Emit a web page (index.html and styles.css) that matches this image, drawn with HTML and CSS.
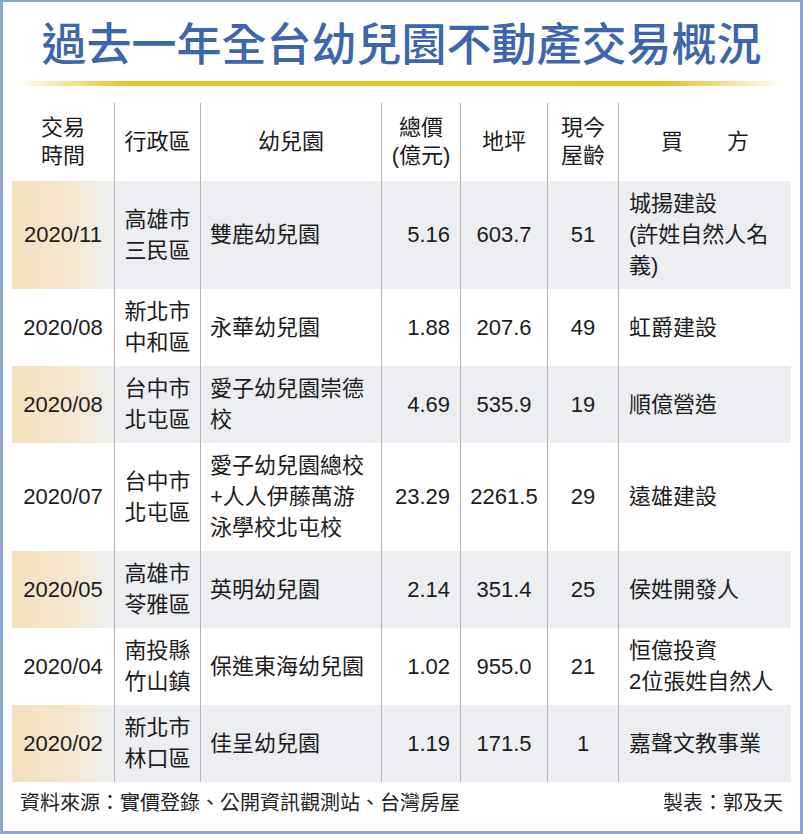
FILE: index.html
```html
<!DOCTYPE html>
<html lang="zh-Hant">
<head>
<meta charset="utf-8">
<title>過去一年全台幼兒園不動產交易概況</title>
<link rel="stylesheet" href="styles.css">
</head>
<body>
<div class="frame">
  <h1 class="title">過去一年全台幼兒園不動產交易概況</h1>
  <div class="rule"></div>
  <div class="table">
    <div class="row head">
      <div class="cell c1">交易<br>時間</div>
      <div class="cell c2">行政區</div>
      <div class="cell c3">幼兒園</div>
      <div class="cell c4">總價<br>(億元)</div>
      <div class="cell c5">地坪</div>
      <div class="cell c6">現今<br>屋齡</div>
      <div class="cell c7">買　　方</div>
    </div>
    <div class="row shade">
      <div class="cell c1">2020/11</div>
      <div class="cell c2">高雄市<br>三民區</div>
      <div class="cell c3">雙鹿幼兒園</div>
      <div class="cell c4">5.16</div>
      <div class="cell c5">603.7</div>
      <div class="cell c6">51</div>
      <div class="cell c7">城揚建設<br>(許姓自然人名<br>義)</div>
    </div>
    <div class="row">
      <div class="cell c1">2020/08</div>
      <div class="cell c2">新北市<br>中和區</div>
      <div class="cell c3">永華幼兒園</div>
      <div class="cell c4">1.88</div>
      <div class="cell c5">207.6</div>
      <div class="cell c6">49</div>
      <div class="cell c7">虹爵建設</div>
    </div>
    <div class="row shade">
      <div class="cell c1">2020/08</div>
      <div class="cell c2">台中市<br>北屯區</div>
      <div class="cell c3">愛子幼兒園崇德<br>校</div>
      <div class="cell c4">4.69</div>
      <div class="cell c5">535.9</div>
      <div class="cell c6">19</div>
      <div class="cell c7">順億營造</div>
    </div>
    <div class="row">
      <div class="cell c1">2020/07</div>
      <div class="cell c2">台中市<br>北屯區</div>
      <div class="cell c3">愛子幼兒園總校<br>+人人伊藤萬游<br>泳學校北屯校</div>
      <div class="cell c4">23.29</div>
      <div class="cell c5">2261.5</div>
      <div class="cell c6">29</div>
      <div class="cell c7">遠雄建設</div>
    </div>
    <div class="row shade">
      <div class="cell c1">2020/05</div>
      <div class="cell c2">高雄市<br>苓雅區</div>
      <div class="cell c3">英明幼兒園</div>
      <div class="cell c4">2.14</div>
      <div class="cell c5">351.4</div>
      <div class="cell c6">25</div>
      <div class="cell c7">侯姓開發人</div>
    </div>
    <div class="row">
      <div class="cell c1">2020/04</div>
      <div class="cell c2">南投縣<br>竹山鎮</div>
      <div class="cell c3">保進東海幼兒園</div>
      <div class="cell c4">1.02</div>
      <div class="cell c5">955.0</div>
      <div class="cell c6">21</div>
      <div class="cell c7">恒億投資<br>2位張姓自然人</div>
    </div>
    <div class="row shade">
      <div class="cell c1">2020/02</div>
      <div class="cell c2">新北市<br>林口區</div>
      <div class="cell c3">佳呈幼兒園</div>
      <div class="cell c4">1.19</div>
      <div class="cell c5">171.5</div>
      <div class="cell c6">1</div>
      <div class="cell c7">嘉聲文教事業</div>
    </div>
  </div>
  <div class="foot">
    <span>資料來源：實價登錄、公開資訊觀測站、台灣房屋</span>
    <span>製表：郭及天</span>
  </div>
</div>
</body>
</html>
```
FILE: styles.css
```css
body {
  margin: 0;
  background: #ffffff;
  font-family: "Liberation Sans", "Noto Sans CJK TC", sans-serif;
  color: #1c1c1c;
}

.frame {
  width: 803px;
  height: 834px;
  box-sizing: border-box;
  border: 3px solid #8fa6d0;
  border-top-width: 2px;
  background: #ffffff;
  display: flex;
  flex-direction: column;
}

.title {
  margin: 17px 0 0;
  font-family: "Noto Sans CJK TC", sans-serif;
  font-size: 45px;
  line-height: 46px;
  font-weight: 500;
  color: #3c67ad;
  text-align: center;
}

.rule {
  height: 5px;
  margin: 16px 15px 0 14px;
  background: linear-gradient(to right,
    rgba(236, 200, 50, 0) 0%,
    #e9c32c 14%,
    #e6bf26 84%,
    rgba(236, 200, 50, 0) 100%);
}

.table {
  margin: 17px 0 0 9px;
  width: 779px;
}

.row {
  display: grid;
  grid-template-columns: 102px 86px 181px 79px 87px 71px 173px;
}

.cell {
  box-sizing: border-box;
  display: flex;
  align-items: center;
  padding: 7px 0 8px;
  font-size: 22px;
  line-height: 31px;
}

.cell + .cell {
  border-left: 1px solid #b4b4b4;
}

.c1, .c2, .c5, .c6 {
  justify-content: center;
  text-align: center;
}

.c3 {
  padding-left: 9px;
}

.c4 {
  justify-content: flex-end;
  text-align: right;
  padding-right: 10px;
}

.c7 {
  padding-left: 10px;
}

.head .cell {
  padding: 11px 0;
  line-height: 28px;
  justify-content: center;
  text-align: center;
}

.shade {
  background: #eceef2;
}

.shade .c1 {
  background: linear-gradient(to right, #f3e1bb 0%, #f4e7cf 55%, #eef0f2 100%);
}

.foot {
  display: flex;
  justify-content: space-between;
  margin: 6px 17px 0;
  font-family: "Noto Sans CJK TC", sans-serif;
  font-size: 20px;
  line-height: 28px;
  color: #222222;
}
```
